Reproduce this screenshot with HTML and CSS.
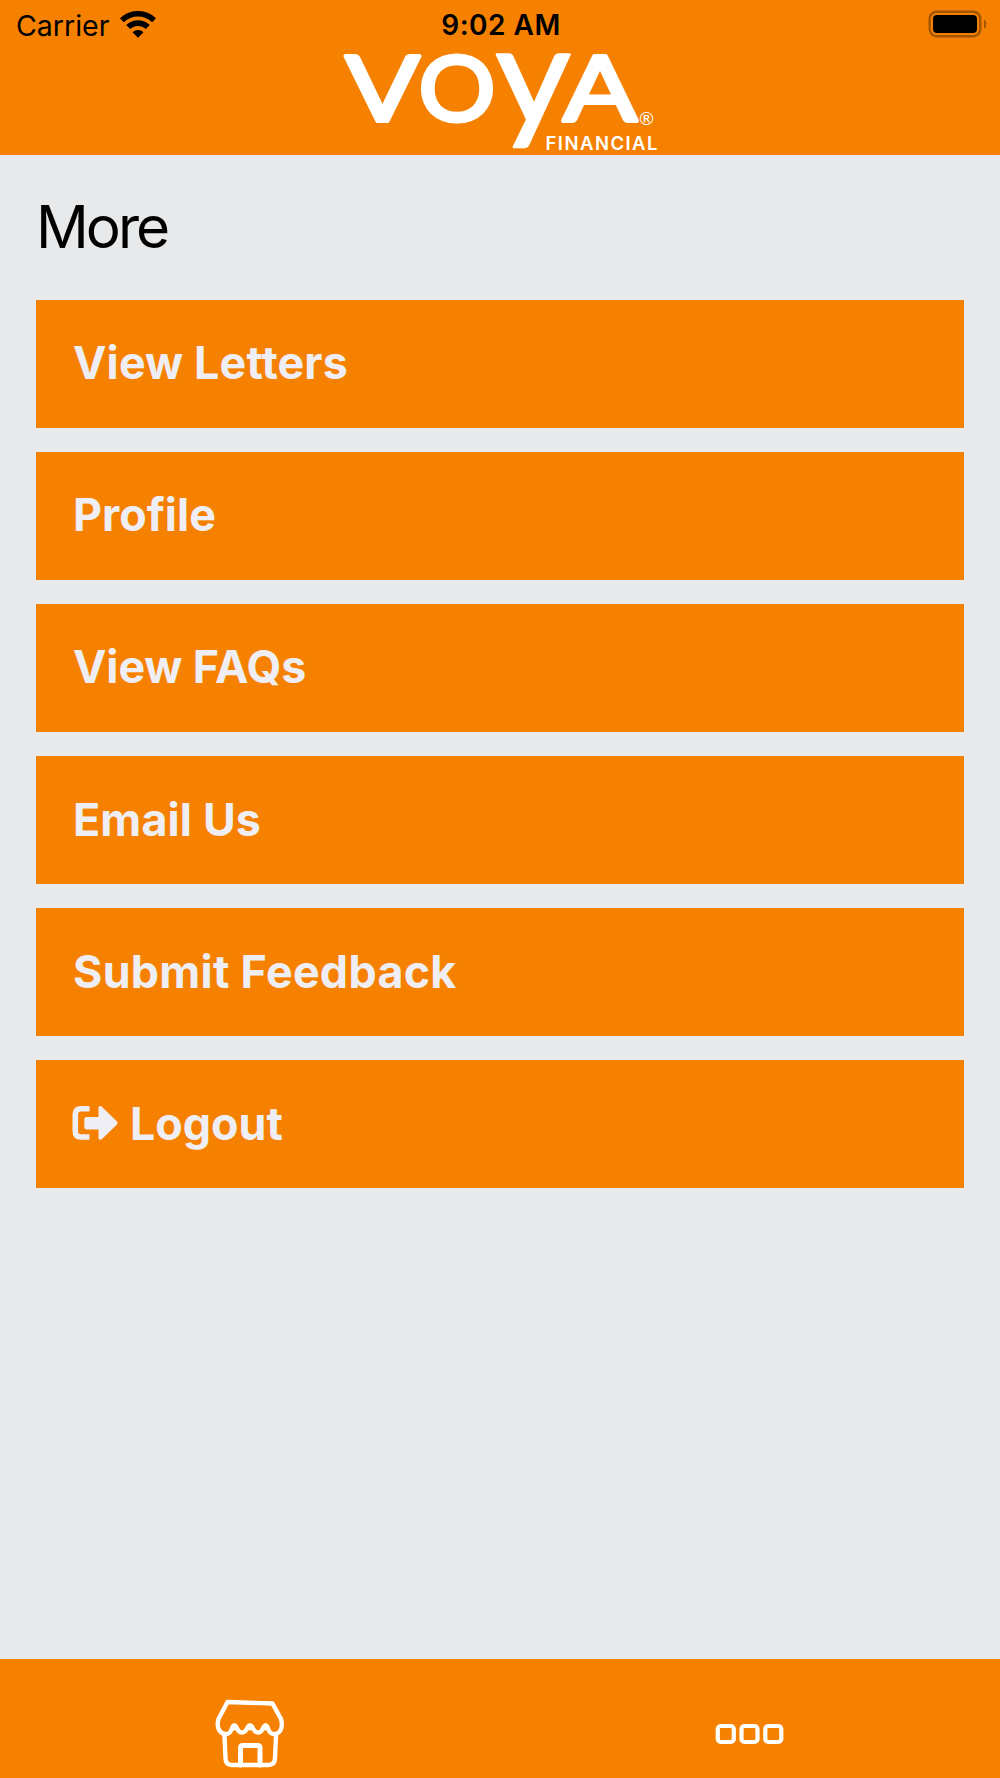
FILE: index.html
```
<!DOCTYPE html>
<html lang="en">
<head>
  <meta charset="UTF-8" />
  <meta name="viewport" content="width=device-width, initial-scale=1.0" />
  <title>Voya Financial - More</title>
  <link rel="stylesheet" href="styles.css">
</head>
<body>
  <header>
    <div class="status-bar">
      <div class="carrier">
        <span>Carrier</span>
        <svg class="wifi" width="36" height="27" viewBox="0 0 36 27">
          <g fill="none" stroke="#000" stroke-width="5.6">
            <path d="M1.9 9.2a23.4 23.4 0 0 1 32.2 0" />
            <path d="M8.2 16.1a14 14 0 0 1 19.6 0" />
          </g>
          <path d="M12.5 21.2a8 8 0 0 1 11 0L18 26.8z" />
        </svg>
      </div>
      <div class="time">9:02 AM</div>
      <svg class="battery" width="60" height="28" viewBox="0 0 60 28">
        <rect x="1.7" y="1.7" width="50.6" height="24.6" rx="7" fill="none" stroke="#a35600" stroke-width="2.4" />
        <rect x="5" y="5" width="44" height="18" rx="4" />
        <path d="M56 9q5 5 0 10z" fill="#a35600" />
      </svg>
    </div>
    <svg class="logo" width="330" height="104" viewBox="0 0 330 104">
      <g class="logo-name">
        <text x="10.5" y="70.5" textLength="74" lengthAdjust="spacingAndGlyphs">V</text>
        <text x="83.5" y="70.5" textLength="77" lengthAdjust="spacingAndGlyphs">O</text>
        <text class="logo-y" x="160.5" y="74" textLength="75" lengthAdjust="spacingAndGlyphs">y</text>
        <text x="228" y="70.5" textLength="74" lengthAdjust="spacingAndGlyphs">A</text>
      </g>
      <text class="logo-mark" x="304" y="74.5">®</text>
      <text class="logo-sub" x="210.5" y="99.5" textLength="112">FINANCIAL</text>
    </svg>
  </header>

  <main>
    <h1>More</h1>
    <div class="menu">
      <a class="item letters">View Letters</a>
      <a class="item profile">Profile</a>
      <a class="item faqs">View FAQs</a>
      <a class="item email">Email Us</a>
      <a class="item feedback">Submit Feedback</a>
      <a class="item logout">
        <svg width="46" height="36" viewBox="0 0 46 36">
          <path d="M17.5 3.8H9Q3.3 3.8 3.3 9.5V26Q3.3 32 9 32H17.5" fill="none" stroke="#efeef5" stroke-width="5.6" />
          <path d="M14.5 12H26.5V2.5Q27.5 0 29.8 1.7L45 16.4Q46 17.9 45 19.4L29.8 34.2Q27.5 35.5 26.5 33.4V24.5H14.5Q12.3 24.5 12.3 22.3V14.2Q12.3 12 14.5 12z" fill="#efeef5" />
        </svg>
        <span>Logout</span>
      </a>
    </div>
  </main>

  <nav>
    <a class="tab">
      <svg width="70" height="70" viewBox="0 0 70 70" fill="none" stroke="#fff" stroke-width="4.4" stroke-linejoin="round" stroke-linecap="round">
        <path d="M12.5 3L57.5 4.5L66 20C68.5 29 65 35 59 35C52 35 54 26.5 50.7 26.5C47.5 26.5 48.5 33.5 43 33.5C37.5 33.5 38.5 26.5 35 26.5C31.5 26.5 32.5 33.5 27 33.5C21.5 33.5 22.5 26.5 19.3 26.5C16 26.5 18 35 11 35C5 35 1 29 3.5 20z" />
        <path d="M19.3 27v2M35 27v2M50.7 27v2" stroke-width="5" />
        <path d="M9.5 37L10.5 59Q10.5 66 17 66H53Q60 66 60 59L61 37" />
        <path d="M25.5 66V49Q25.5 46.5 28 46.5H42.5Q45 46.5 45 49V66" stroke-width="5" />
      </svg>
    </a>
    <a class="tab">
      <svg width="70" height="22" viewBox="0 0 70 22" fill="none" stroke="#fff" stroke-width="4.2">
        <rect x="2.8" y="3" width="16" height="16" rx="3" />
        <rect x="26.5" y="3" width="16" height="16" rx="3" />
        <rect x="50.3" y="3" width="16" height="16" rx="3" />
      </svg>
    </a>
  </nav>
</body>
</html>
```
FILE: styles.css
```
* {
  box-sizing: border-box;
}
body {
  margin: 0;
  height: 1778px;
  display: flex;
  flex-direction: column;
  font-family: Inter, 'Liberation Sans', sans-serif;
  background-color: #e7e9eb;
  color: #000;
}
header {
  height: 154.5px;
  background-color: #f68100;
  display: flex;
  flex-direction: column;
  align-items: center;
}
.status-bar {
  width: 100%;
  height: 50px;
  padding: 0 14px 0 16px;
  display: grid;
  grid-template-columns: 1fr auto 1fr;
  align-items: center;
}
.carrier {
  display: flex;
  align-items: center;
  gap: 11px;
  font-size: 28.5px;
}
.wifi {
  margin-bottom: 2px;
}
.time {
  font-size: 28px;
  font-weight: 600;
  letter-spacing: 0.5px;
}
.battery {
  justify-self: end;
  margin: 0 -2px 2px 0;
}
.logo {
  flex-shrink: 0;
  overflow: visible;
}
.logo text {
  fill: #fff;
  font-family: Lato, sans-serif;
}
.logo-name text {
  font-size: 92px;
  font-weight: 400;
  stroke: #fff;
  stroke-width: 4;
  stroke-linejoin: round;
}
.logo-name .logo-y {
  font-size: 135px;
  stroke-width: 2.5;
}
.logo .logo-mark {
  font-size: 18px;
}
.logo .logo-sub {
  font-family: Inter, sans-serif;
  font-size: 18.5px;
  font-weight: 600;
}
main {
  flex: 1;
  padding: 36px 36px 0;
}
h1 {
  margin: 0 0 37.1px;
  font-size: 58.5px;
  line-height: 72px;
  font-weight: 400;
  letter-spacing: -3px;
}
.menu {
  display: flex;
  flex-direction: column;
  gap: 24.15px;
}
.item {
  height: 128px;
  padding: 0 37px 1px;
  display: flex;
  align-items: center;
  background-color: #f68100;
  color: #efeef5;
  font-size: 44.8px;
  font-weight: 700;
}
.feedback {
  letter-spacing: 0.3px;
}
.letters, .email {
  letter-spacing: 0.15px;
}
.faqs {
  letter-spacing: -0.1px;
}
.logout {
  gap: 12px;
  padding-left: 36px;
}
.logout svg {
  margin-bottom: 1px;
}
nav {
  height: 119px;
  padding: 38px 0 0;
  display: flex;
  background-color: #f68100;
}
.tab {
  flex: 1;
  height: 74px;
  display: flex;
  align-items: center;
  justify-content: center;
}
```
